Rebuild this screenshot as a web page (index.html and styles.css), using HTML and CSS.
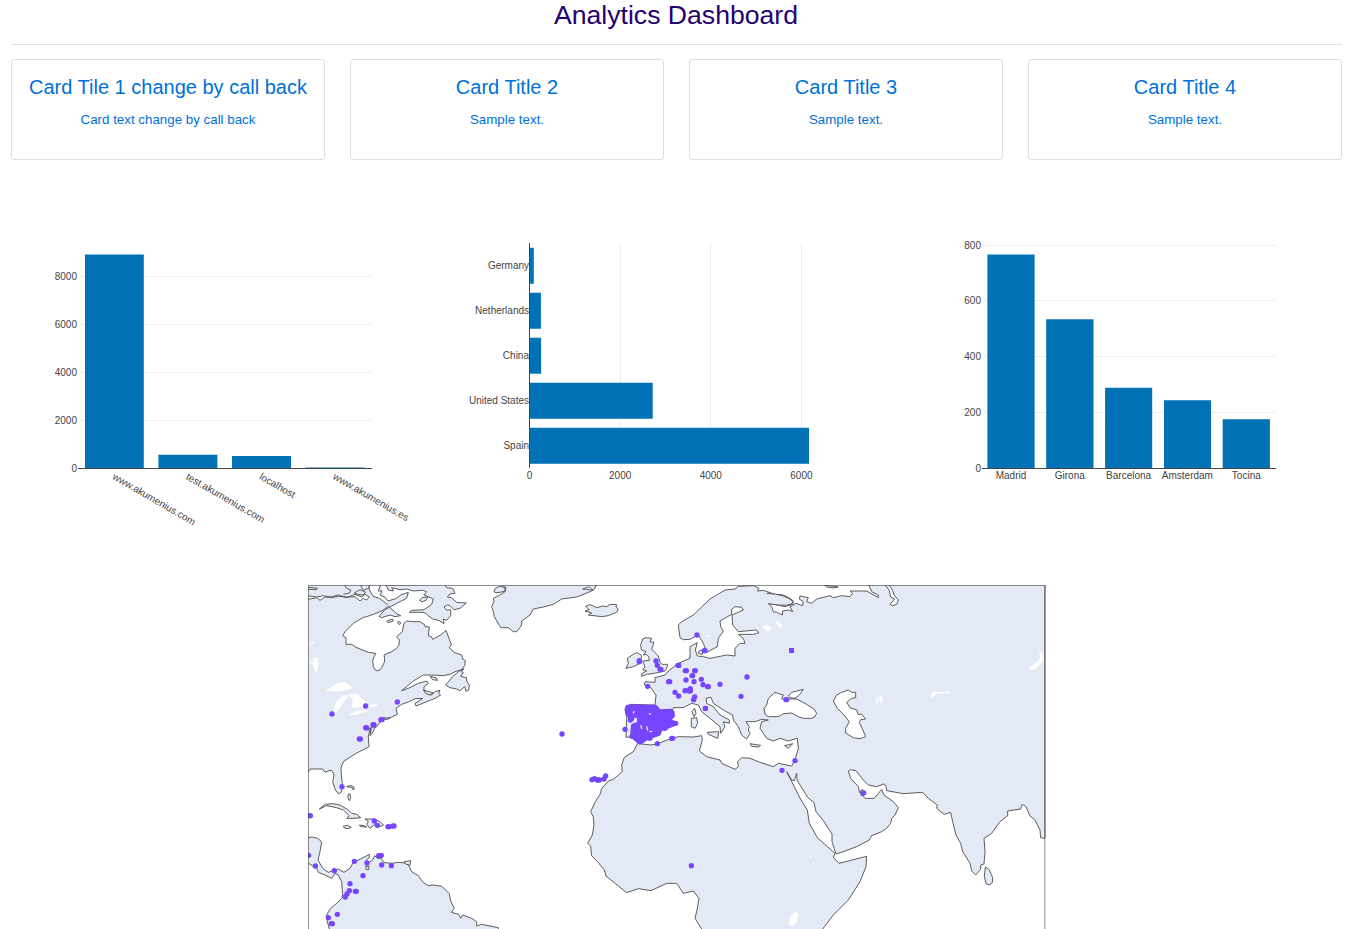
FILE: index.html
```html
<!DOCTYPE html>
<html lang="en">
<head>
<meta charset="utf-8">
<title>Analytics Dashboard</title>
<link rel="stylesheet" href="styles.css">
</head>
<body>
<main class="page">
  <h2 class="title">Analytics Dashboard</h2>
  <hr class="rule">
  <section class="cards">
    <article class="card"><h4>Card Tile 1 change by call back</h4><p>Card text change by call back</p></article>
    <article class="card"><h4>Card Title 2</h4><p>Sample text.</p></article>
    <article class="card"><h4>Card Title 3</h4><p>Sample text.</p></article>
    <article class="card"><h4>Card Title 4</h4><p>Sample text.</p></article>
  </section>
  <section class="charts">
    <svg class="chart" width="452" height="350" viewBox="0 220 452 350">
      <path class="grid" d="M78 276.5H372M78 324.5H372M78 372.5H372M78 420.5H372"/>
      <path class="bar" d="M85 468V254.5H143.8V468ZM158.4 468V454.8H217.4V468ZM232 468V455.9H291V468ZM305.4 468V467.4H364.6V468Z"/>
      <path class="axis" d="M78 468.5H372"/>
      <g class="end"><text x="77" y="280">8000</text><text x="77" y="328">6000</text><text x="77" y="376">4000</text><text x="77" y="424">2000</text><text x="77" y="472">0</text></g>
      <text transform="translate(111.7 478.6) rotate(30)">www.akumenius.com</text>
      <text transform="translate(185.2 478.6) rotate(30)">test.akumenius.com</text>
      <text transform="translate(258.7 478.6) rotate(30)">localhost</text>
      <text transform="translate(332.2 478.6) rotate(30)">www.akumenius.es</text>
    </svg>
    <svg class="chart" width="452" height="350" viewBox="452 220 452 350">
      <path class="grid" d="M620.5 243V468M710.5 243V468M801.5 243V468"/>
      <path class="bar" d="M529.5 247.7H533.8V283.7H529.5ZM529.5 292.7H540.9V328.7H529.5ZM529.5 337.7H541.1V373.7H529.5ZM529.5 382.7H652.7V418.7H529.5ZM529.5 427.7H809V463.7H529.5Z"/>
      <path class="axis" d="M529.5 243V468"/>
      <g class="end"><text x="529" y="269">Germany</text><text x="529" y="314">Netherlands</text><text x="529" y="359">China</text><text x="529" y="404">United States</text><text x="529" y="449">Spain</text></g>
      <g class="mid"><text x="529.5" y="479">0</text><text x="620.2" y="479">2000</text><text x="710.8" y="479">4000</text><text x="801.4" y="479">6000</text></g>
    </svg>
    <svg class="chart" width="451" height="350" viewBox="904 220 451 350">
      <path class="grid" d="M982 245.5H1276M982 300.5H1276M982 356.5H1276M982 412.5H1276"/>
      <path class="bar" d="M987.4 468V254.4H1034.6V468ZM1046.2 468V319.3H1093.5V468ZM1105.1 468V387.7H1152.2V468ZM1164 468V400.2H1211V468ZM1222.7 468V419.2H1269.9V468Z"/>
      <path class="axis" d="M982 468.5H1276"/>
      <g class="end"><text x="981" y="249">800</text><text x="981" y="304">600</text><text x="981" y="360">400</text><text x="981" y="416">200</text><text x="981" y="472">0</text></g>
      <g class="mid"><text x="1011" y="479">Madrid</text><text x="1069.8" y="479">Girona</text><text x="1128.6" y="479">Barcelona</text><text x="1187.4" y="479">Amsterdam</text><text x="1246.3" y="479">Tocina</text></g>
    </svg>
  </section>
  <section class="map-row">
    <svg class="map" width="738" height="344" viewBox="24 30 2214 1032">
      <g class="land">
        <!-- North America -->
        <path d="M20 74L50 68 60 76 75 66 95 68 115 64 140 66 165 65 180 78 190 70 200 75 208 66 195 58 185 66 165 58 140 68 115 60 90 66 70 62 50 66 20 62V20H205L208 45 220 64 238 70 268 92 245 108 225 116 200 125 190 127 160 145 135 170 128 182 138 188V208L155 208 168 217 180 222 205 232 227 235 218 255 220 275 225 284 232 287 240 285 245 278 253 262 254 250 252 240 275 230 290 220 297 210 298 195 290 185 307 170 312 145 320 138 340 140 360 140 375 150 375 155 388 156 385 182 394 185 398 193 425 178 438 166 447 190 454 210 448 218 462 232 485 240 488 252 496 257 494 272 484 284 465 290 450 298 430 302 400 300 370 300 340 318 322 333 305 347 325 340 355 325 380 318 385 325 372 335 372 345 380 356 395 360 405 350 420 346 416 355 422 360 405 370 380 380 348 393 345 385 357 378 368 370 345 371 325 381 305 388 288 400 292 418 282 423 270 428 245 435 230 455 222 460 215 475 208 470 205 485 207 515 190 524 178 530 160 540 130 560 123 578 124 600 127 625 125 650 116 657 106 645 98 620 102 600 97 588 90 586 75 592 68 582 30 582 20 600Z"/>
        <path d="M20 36L53 40 48 44 20 43ZM163 54L180 44 197 52 190 60 172 58ZM132 28L140 40 153 45 148 54 130 58M180 28L190 46 205 40 210 28"/>
        <path d="M242 28L235 48 246 48 240 60 256 68 264 78 290 70 302 60 325 52 320 70 290 85 270 96 255 104 237 124 245 128 270 120 285 125 302 122 290 116 265 94M258 30L265 45 280 48 275 38 300 44 320 42 340 48 368 46 380 50 372 60 400 72 395 88 372 104 335 106 328 112 372 112 398 132 418 137 432 146 430 132 440 136 452 122V104L440 106 432 96 442 90 450 92 462 104 480 100 499 84 470 82 454 68 442 66 450 57 465 55 458 40 440 38 435 28Z"/>
        <path d="M358 76L366 68 383 66 378 76 366 80ZM260 138L278 132 280 138 264 143ZM292 142L298 139 302 144 298 149ZM390 304L408 308 413 316 398 314ZM437 330L458 305 475 290 492 281 484 290 490 292 482 304 500 308 500 318 508 330 506 345 498 349 494 335 480 347 470 342 450 338ZM370 345L385 350 400 353 390 360 378 356ZM250 428L270 430 258 434ZM206 462L212 458 210 472ZM214 458L225 455 220 470 210 482Z"/>
        <!-- Caribbean -->
        <path d="M58 702L75 688 100 686 120 690 145 705 155 715 170 718 182 728 165 730 140 730 148 722 130 705 110 698 80 692ZM130 754L142 751 154 757 145 761 133 759ZM178 750L192 752 200 756 182 755ZM195 732L220 732 240 740 250 750 240 755 225 748 210 760 200 748 205 740ZM140 634L155 632 163 638 160 645 155 636 145 637ZM145 658L150 656 152 668 148 677 143 667Z"/>
        <!-- Central and South America -->
        <path d="M20 790L35 786 53 790 65 800 60 830 54 855 68 880 85 892 100 886 115 882 132 892 150 880 160 862 182 852 208 838 208 848 198 856 200 870 208 862 218 855 224 842 232 850 244 850 252 863 280 865 292 862 320 864 328 875 335 890 355 902 370 923 385 932 400 930 425 934 448 956 452 978 463 1000 454 1012 476 1018 482 1030 488 1020 515 1030 530 1040 530 1053 545 1048 595 1058V1080H95L88 1062 82 1040 80 1020 92 1000 110 985 125 970 128 960 125 920 115 900 105 895 95 910 85 905 75 900 55 892 50 880 30 868 20 860Z"/>
        <path d="M312 860L332 857 330 871 318 868ZM197 874L207 874 206 884 199 884Z"/>
        <!-- Greenland, Iceland, British Isles -->
        <path d="M598 26L618 38 615 50 600 60 580 70 582 80 575 95 580 110 583 125 596 148 603 158 625 158 640 170H650L665 150 665 138 690 120 700 102 730 96 760 88 785 72 830 66 870 50 882 44 890 28ZM582 50L586 40 600 34 614 38 616 48 600 52 588 53ZM848 42L868 35 878 45Z"/>
        <path d="M857 94L868 89 878 92 890 98 908 93 920 95 930 88 950 89 948 96 955 102 950 112 925 122 905 125 865 120 875 114 855 108 868 104Z"/>
        <path d="M1028 192L1038 188 1055 190 1050 200 1062 202 1055 222 1068 236 1075 243 1080 262 1087 268 1103 268 1100 280 1095 288 1078 292 1050 297 1040 298 1025 304 1025 296 1040 288 1028 284 1035 276 1028 258 1048 256 1046 245 1038 238 1030 240 1038 230 1024 225 1022 210ZM978 280L985 265 982 250 1000 238 1010 233 1024 240 1024 250 1018 256 1020 265 1000 275Z"/>
        <!-- Europe, Asia and Africa -->
        <path d="M1135 150L1145 140 1180 120 1205 96 1230 72 1275 45 1305 42 1315 34 1360 32 1377 40 1373 48 1390 46 1425 58 1450 60 1470 70 1480 78 1478 88 1455 95 1430 90 1405 86 1415 95 1420 110 1430 112 1447 120 1448 108 1465 105 1478 110 1470 95 1488 85 1508 92 1510 80 1498 72 1500 63 1525 68 1520 80 1535 85 1550 72 1590 62 1600 68 1625 62 1650 65 1658 55 1650 48 1700 48 1735 68 1735 60 1715 50 1702 20H2235V790L2222 788 2220 765 2205 735 2190 723 2178 695 2172 690 2165 690 2162 702 2123 708V722L2100 740 2075 775 2052 790 2055 830 2052 867 2042 870V883L2027 900 2015 888 2010 865 1988 830 1982 805 1968 780 1958 740 1952 712 1932 718 1910 700 1912 690 1885 670 1868 652 1810 656 1760 647 1758 632 1750 627 1730 635 1705 630 1690 615 1678 600 1668 587 1652 584 1645 588 1652 610 1675 635 1678 650 1695 670 1723 670 1745 643 1752 660 1780 680 1795 698 1785 720 1775 730 1772 745 1760 760 1745 770 1715 782 1708 795 1670 815 1625 832 1608 837 1596 800V777L1570 737 1548 710 1542 683 1523 667 1492 617 1490 595 1483 617 1475 615 1460 590 1503 675 1522 705 1528 745 1552 788 1605 835 1600 847 1617 865 1700 844 1698 875 1680 920 1645 975 1600 1020 1568 1062V1080H1215L1205 1062 1185 1030 1192 1000 1197 970 1180 948 1150 955 1130 925H1100L1053 947 1015 941 980 953 918 903 913 885 895 863 875 842 872 813 863 805 877 780 882 750 880 725 872 710 886 680 902 655 904 642 925 618 940 613 967 590 965 570 973 547 1000 530 1013 505 1050 510 1065 508 1075 505 1115 490 1135 485 1180 486 1205 482 1207 495 1198 528 1220 545 1260 555 1265 565 1305 583 1315 575 1313 560 1325 548 1350 550 1380 562 1420 575 1435 565 1475 573 1485 555 1495 520 1492 490 1465 498 1440 490 1420 498 1400 490 1380 460 1385 440 1405 435 1385 433 1365 440 1338 440 1348 455 1345 465 1350 475 1340 492 1325 480 1315 455 1300 435 1298 420 1275 408 1240 385 1233 367 1218 370 1220 385 1240 395 1260 420 1288 435 1288 445 1270 440 1275 455 1262 475 1260 455 1230 430 1205 410 1195 390 1175 385 1150 398 1120 398 1110 415 1082 440 1080 460 1050 490 1015 498 998 485 978 487 980 430 975 400 990 388 1065 390 1068 360 1050 335 1033 330 1035 320 1065 322V308L1095 300 1105 288 1135 265 1170 250 1170 215 1192 203 1186 225 1192 243 1210 245 1230 250 1280 240 1305 243 1305 220 1320 205 1335 205 1330 190 1315 178 1360 178 1377 173 1368 165 1315 170 1298 150 1296 120 1330 105 1325 97 1305 95 1295 103 1295 118 1260 138 1262 155 1270 168 1255 190 1252 215 1220 232 1210 205 1195 180 1185 185 1170 193 1150 194 1140 188Z"/>
        <path d="M1176 410L1184 400 1188 415 1182 425ZM1174 430L1190 428 1193 445 1185 460 1174 455ZM1222 472L1256 470 1253 490 1225 478ZM1350 506L1382 511 1375 516 1355 514ZM1454 512L1478 506 1465 520ZM1198 227L1210 225 1207 238 1195 235ZM2056 876L2068 885 2078 908 2077 923 2068 930 2058 926 2053 905ZM1573 30L1615 36 1600 39 1580 36ZM1680 648L1688 643 1690 655 1684 662Z"/>
        <path d="M1400 55Q1455 57 1480 80Q1475 98 1405 86"/>
      </g>
      <g class="sea">
        <!-- Black Sea, Azov, Caspian, Ob gulf -->
        <path d="M1425 352L1405 370 1400 390 1392 400 1395 418 1405 425 1435 425 1450 416 1475 414 1495 425 1510 430 1535 430 1545 425 1550 415 1543 403 1520 388 1490 372 1462 372 1445 372 1450 360 1442 358ZM1465 363L1475 352 1510 343 1498 360 1485 370 1470 368ZM1600 378L1610 360 1625 352 1645 345 1655 352 1667 352V368L1655 370 1640 382 1650 398 1670 405 1674 418 1685 418 1697 432 1682 434 1678 442 1690 468 1697 485 1680 491 1660 488 1637 474 1637 460 1648 440 1632 420 1612 400ZM1753 26L1768 46 1772 66 1784 72 1770 88 1778 92 1790 88 1795 75 1782 60 1776 42 1762 26Z"/>
      </g>
      <g class="lake">
        <path d="M28 207L45 197 40 207ZM25 250L38 262 42 248 55 249 55 270 47 297 41 275ZM75 349L112 325 135 321 158 338 145 345 105 350 92 347ZM102 416L104 390 112 375 130 362 152 360 135 375 118 402ZM145 358L175 357 185 372 200 380 188 392 165 400 155 395 158 375ZM145 420L170 408 205 405 200 410 165 420ZM205 390L233 387 230 394 208 397Z"/>
        <path d="M1385 155L1400 149 1416 160 1403 170ZM1425 137L1440 142 1448 157 1437 157ZM1212 186L1229 179 1224 187ZM1727 383L1730 365 1736 370 1740 358 1748 372 1747 384 1740 381 1735 370 1735 384ZM1892 358L1902 348 1920 352 1950 349 1947 354 1908 356 1897 371ZM2186 280L2210 262 2220 250 2218 225 2228 240 2230 255 2210 280 2198 285ZM1466 1048L1470 1025 1485 1010 1496 1015 1490 1042 1478 1051ZM1528 843L1533 840 1536 845 1530 848ZM28 850L38 848 40 855Z"/>
      </g>
      <path class="blob" d="M983 396L1066 396 1078 410 1112 408 1118 422 1104 436 1125 445 1095 458 1080 462 1076 476 1044 486 1020 502 1000 485 998 472 1000 452 1018 446 1018 425 1000 418 995 432 983 415Z"/>
      <path class="hole" d="M1023 452L1025 460M1048 416L1051 417M1040 455L1043 465M1050 470L1055 469M1002 410L1000 414"/>
      <path class="dots" d="M96 417h0M197 393h0M292 381h0M243 434h3M219 449h3M200 459h0M197 458h3M178 492h3M126 635h0M31 722h0M28 722h0M223 738h0M232 751h0M264 755h3M279 753h3M26 841h0M46 873h0M103 887h0M163 859h0M201 864h0M236 842h0M244 841h0M245 870h0M274 872h0M189 902h0M150 926h0M148 947h0M141 957h0M136 966h0M166 949h0M169 949h0M112 1018h0M85 1028h0M94 1046h3
      M786 477h0M1018 257v3M1068 258h0M1072 271h0M1080 283h3M1043 334h0M975 463h0M991 435h0M1072 506h0M1115 490h3M876 614h0M884 611h0M893 616h0M898 615h-6M912 612h0M917 603h0M1174 872h0
      M1191 180h0M1213 227h2M1134 271h2M1156 287h3M1184 287h2M1176 302h2M1158 315h0M1182 320h0M1204 313h0M1209 329h0M1223 335h2M1260 328h0M1106 320h3M1341 306h0M1323 364h0M1125 352h0M1136 363h0M1155 347h3M1168 348h3M1171 341h0M1184 366h0M1181 374h0M1216 400h0M1458 374h2M1485 557h0M1446 586h0M1691 654h0
      M982 405h0M990 397h0M1014 395h0M1036 397h0M1060 398h0M1100 410h0M1116 413h0M1127 445h0M1115 448h0M1095 460h0M1050 490h0M1018 498h0M996 484h0"/>
      <path class="marker" d="M1467 219h15v15h-15ZM1129 264h14v14h-14ZM1210 393h13v14h-13Z"/>
      <rect class="frame" x="25.5" y="31.5" width="2209" height="1080"/>
    </svg>
  </section>
</main>
</body>
</html>
```
FILE: styles.css
```css
* { box-sizing: border-box; }
html { font-size: 13.3px; }
body {
  margin: 0;
  background: #fff;
  font-family: "Liberation Sans", Arial, sans-serif;
}
.page {
  height: 929px;
  overflow: hidden;
  display: flex;
  flex-direction: column;
}
.title {
  margin: 0;
  padding-right: 3px;
  height: 44px;
  font-size: 2rem;
  line-height: 31px;
  font-weight: 400;
  text-align: center;
  color: #240070;
}
.rule {
  width: 1331px;
  margin: 0 0 14px 11px;
  border: 0;
  border-top: 1px solid #e1e1e1;
}
.cards {
  display: grid;
  grid-template-columns: repeat(4, 314px);
  gap: 25px;
  padding-left: 11px;
}
.card {
  height: 101px;
  padding-top: 15px;
  border: 1px solid #dfdfdf;
  border-radius: 3px;
  text-align: center;
  color: #0070d9;
  white-space: nowrap;
}
.card h4 {
  margin: 0 0 11px;
  font-size: 20px;
  line-height: 24px;
  font-weight: 400;
}
.card p {
  margin: 0;
  font-size: 13.33px;
  line-height: 20px;
}
.charts {
  display: flex;
  margin-top: 60px;
  height: 365px;
}
.chart { display: block; flex: none; }
.chart text { font-size: 10px; fill: #444; }
.end { text-anchor: end; }
.mid { text-anchor: middle; }
.grid { stroke: #eee; fill: none; }
.axis { stroke: #444; fill: none; }
.bar { fill: #0072b5; }
.map-row { padding-left: 308px; }
.map { display: block; }
.land path, .sea path {
  stroke: #444;
  stroke-width: 2.6;
  stroke-linejoin: round;
}
.land path { fill: #e3eaf6; }
.sea path, .lake path { fill: #fff; }
.dots {
  stroke: #7645ff;
  stroke-width: 16;
  stroke-linecap: round;
  fill: none;
}
.marker { fill: #7645ff; }
.blob {
  fill: #7645ff;
  stroke: #7645ff;
  stroke-width: 14;
  stroke-linejoin: round;
}
.hole {
  stroke: #e3eaf6;
  stroke-width: 4;
  stroke-linecap: round;
}
.frame { fill: none; stroke: #444; stroke-opacity: .6; stroke-width: 3; }
```
